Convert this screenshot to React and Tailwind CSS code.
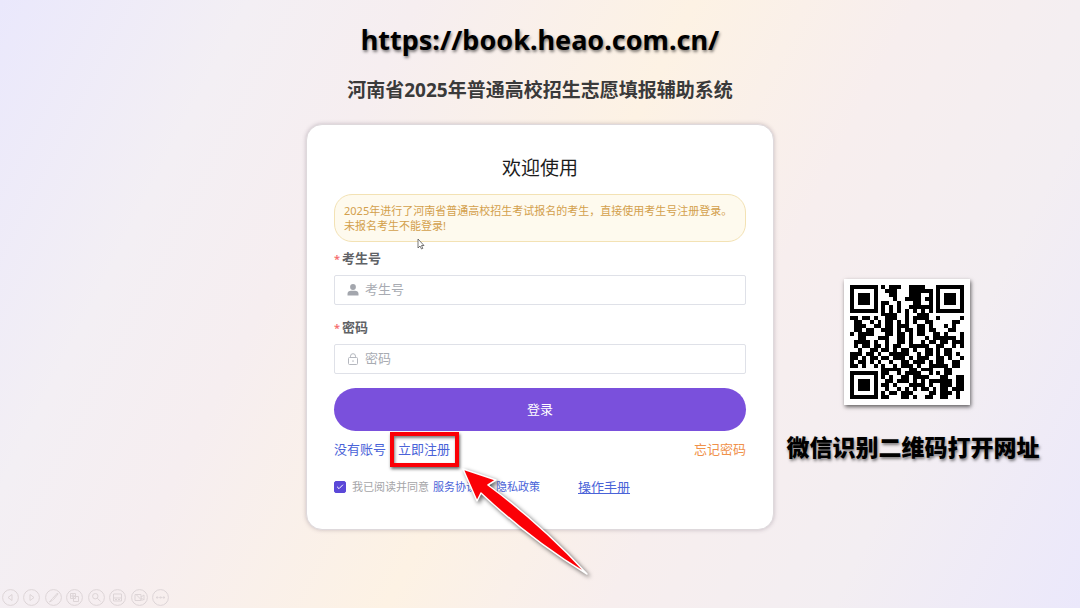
import React, { useState } from 'react';
import { Check } from 'lucide-react';

const QR_ROWS = [
    '#######.#.###..####...#######',
    '#.....#..###...######.#.....#',
    '#.###.#...##...###..#.#.###.#',
    '#.###.#....#..####.##.#.###.#',
    '#.###.#.##..#...##..#.#.###.#',
    '#.....#.#.#.#..######.#.....#',
    '#######.#.#.#.#.#.#.#.#######',
    '........####..#..###.........',
    '##.##.#..###..#.####..#.....#',
    '.##..#.#.##.#.#.#..##.....##.',
    '.###..##.##.###..##.#...#.#..',
    '.##.##..###.#.##.##.##...##..',
    '#.####...##.##.#.##..##.#...#',
    '..##...###..##.#...#.######.#',
    '.####.#..#..##.#..#.##.##.###',
    '.#.##.##.#.##..#####..##..#.#',
    '..#..##.##.#.##.#..##.#.##...',
    '###.##.#..#####..#.##.#.##.#.',
    '##.#.##.##.###.#.###..##.#..#',
    '#.##.#.#..#..##.###.#.##..##.',
    '##.#..#.#..#.###.#..#####.##.',
    '........#####..##.###...##...',
    '#######.##..#.####..#.#.##...',
    '#.....#.#.#..##.####...##..##',
    '#.###.#..##.###.#.#.######.##',
    '#.###.#.##.#...####.#..###.##',
    '#.###.#..#..#.#.#.##.#.##.###',
    '#.....#.#.##.###....##.###.#.',
    '#######.##...##.#..##..##..#.',
];

const QrCode = () => (
    <div className="bg-white p-1.5 shadow-[1px_2px_4px_rgba(0,0,0,0.6)]">
        <svg className="w-[114px] h-[114px] block" viewBox="0 0 29 29" shapeRendering="crispEdges" role="img" aria-label="二维码">
            {QR_ROWS.map((row, y) =>
                row.split('').map((cell, x) => (
                    cell === '#' ? <rect key={`${x}-${y}`} x={x} y={y} width="1" height="1" /> : null
                ))
            )}
        </svg>
    </div>
);

const UserIcon = () => (
    <svg className="w-3 h-3 shrink-0" viewBox="0 0 12 12" fill="#a3a6ad">
        <circle cx="6" cy="3" r="2.9" />
        <path d="M0.5 11.5V9.8C0.5 7.9 2 6.8 4 6.8h4c2 0 3.500 1.100 3.500 3v1.700z" />
    </svg>
);

const LockIcon = () => (
    <svg className="w-3 h-3 shrink-0" viewBox="0 0 12 12" fill="none" stroke="#b4b7be" strokeWidth="1">
        <rect x="1.500" y="4.500" width="9" height="7" rx="1" />
        <path d="M3.500 4.500V3.200a2.500 2.500 0 0 1 5 0v1.300M6 7.200v1.800" />
    </svg>
);

const Field = ({ id, label, type, icon }) => (
    <div>
        <label htmlFor={id} className="block mb-2 text-[13px] leading-4 font-semibold text-[#606266]">
            <span className="text-[#f56c6c] mr-0.5 text-[11px]">*</span>{label}
        </label>
        <div className="flex items-center gap-1.5 h-[30px] px-3 bg-white border border-[#dfe1e8] rounded-xs">
            {icon}
            <input
                id={id}
                type={type}
                placeholder={label}
                className="flex-1 min-w-0 text-[13px] text-[#606266] placeholder:text-[#a8abb2] outline-none"
            />
        </div>
    </div>
);

// Red box and arrow over the register link
const Callout = () => (
    <>
        <span className="absolute -left-[8px] -top-[7px] w-[69px] h-[35px] border-4 border-[#fb0006] shadow-[1px_2px_3px_rgba(0,0,0,0.6),inset_1px_2px_3px_rgba(0,0,0,0.5)] pointer-events-none"></span>
        <svg className="absolute left-[58px] top-6 w-[140px] h-[122px] max-w-none z-10 pointer-events-none drop-shadow-[2px_2px_2px_rgba(0,0,0,0.6)]" viewBox="0 0 140 122">
            <path d="M7 6L40 17L32 22Q86 62 131 111Q76 78 25 30L21 38Z" fill="#fb0006" stroke="#fff" strokeWidth="1.500" strokeLinejoin="round" />
        </svg>
    </>
);

const Pointer = () => (
    <svg className="absolute left-[82px] top-[43px] w-2 h-3" viewBox="0 0 8 12">
        <path d="M1 1v9l2-2 1.500 3 1.300-.6L4.500 7.500H7z" fill="#fff" stroke="#555" strokeWidth=".8" />
    </svg>
);

const SLIDE_TOOLS = [
    { label: '上一页', icon: <path d="M10 5.500v6L6 8.500z" /> },
    { label: '下一页', icon: <path d="M7 5.500v6l4-3z" /> },
    { label: '画笔', icon: <path d="M12.500 4L7.500 9.500l1 1L13 5zM7 10l-2.500 3 3.200-1.800" /> },
    { label: '全部幻灯片', icon: <path d="M4.500 4.500h5v5h-5zM7.500 7.500h5v5h-5zM4.500 7h5M7 4.500v5" /> },
    { label: '放大', icon: <path d="M10 7.200a2.700 2.700 0 1 1-5.400 0 2.700 2.700 0 0 1 5.400 0zM9.400 9.300l3.200 3.200" /> },
    { label: '字幕', icon: <path d="M4.500 5h8v7h-8zM4.500 9h8M6 10.500h2M9 10.500h2" /> },
    { label: '摄像头', icon: <path d="M4 5.500h6v6H4zM10 8l3-2v5l-3-2M4.500 5l7 7" /> },
    { label: '更多', icon: <path d="M4.500 8h1.500v1h-1.500zM7.800 8h1.500v1h-1.500zM11 8h1.500v1h-1.500z" /> },
];

const SlideToolbar = () => (
    <div className="flex justify-between w-[167px] ml-0.5 mb-0.5 mt-auto">
        {SLIDE_TOOLS.map((tool) => (
            <button key={tool.label} type="button" aria-label={tool.label} className="w-[17px] h-[17px]">
                <svg viewBox="0 0 17 17" fill="none" stroke="#ddd5d7" strokeWidth="1">
                    <circle cx="8.500" cy="8.500" r="7.900" />
                    {tool.icon}
                </svg>
            </button>
        ))}
    </div>
);

const LoginCard = () => {
    const [agreed, setAgreed] = useState(true);

    return (
        <form
            className="bg-white border border-[#ded9dc] rounded-2xl px-[27px] pt-[31px] pb-8 shadow-[0_0_4px_rgba(90,70,90,0.3)]"
            onSubmit={(e) => e.preventDefault()}
        >
            <h2 className="text-center text-[19px] leading-6 text-[#1c1c1c]">欢迎使用</h2>

            <div className="relative mt-3.5 mb-2 px-[9px] py-2 bg-[#fefaee] border border-[#f3e2b4] rounded-[18px] text-[11px] leading-[15px] text-[#d3a04c]">
                <p className="whitespace-nowrap">2025年进行了河南省普通高校招生考试报名的考生，直接使用考生号注册登录。</p>
                <p>未报名考生不能登录!</p>
                <Pointer />
            </div>

            <div className="flex flex-col gap-3.5">
                <Field id="examinee" label="考生号" type="text" icon={<UserIcon />} />
                <Field id="password" label="密码" type="password" icon={<LockIcon />} />
                <button type="submit" className="h-[43px] w-full rounded-full bg-[#7a50dc] text-white text-[13px]">登录</button>
            </div>

            <div className="flex justify-between mt-2 text-[13px] leading-5 text-[#4a63d8]">
                <div className="flex gap-3">
                    <span>没有账号</span>
                    <a href="#register" className="relative">立即注册<Callout /></a>
                </div>
                <a href="#forgot" className="text-[#f0914a]">忘记密码</a>
            </div>

            <div className="flex items-center mt-[18px] text-[11px] leading-5">
                <span className="relative w-3 h-3 mr-1.5">
                    <input
                        id="agree"
                        type="checkbox"
                        checked={agreed}
                        onChange={() => setAgreed(!agreed)}
                        className="block w-3 h-3 appearance-none rounded-xs border border-[#5b48d8] checked:bg-[#5b48d8]"
                    />
                    {agreed && <Check className="absolute inset-0.5 w-2 h-2 text-white pointer-events-none" strokeWidth={3} />}
                </span>
                <label htmlFor="agree" className="text-[#a5a5a8] mr-1">我已阅读并同意</label>
                <a href="#terms" className="text-[#4a63d8]">服务协议</a>
                <span className="text-[#a5a5a8] mx-1">和</span>
                <a href="#privacy" className="text-[#4a63d8]">隐私政策</a>
                <a href="#manual" className="ml-[38px] text-[13px] text-[#4a63d8] underline">操作手册</a>
            </div>
        </form>
    );
};

const App = () => (
    <div className="min-h-screen flex flex-col overflow-hidden font-['Noto_Sans','Noto_Sans_CJK_SC',sans-serif] bg-[linear-gradient(117deg,#eae8fc_0%,#f3eff4_18%,#f6eef0_30%,#fdf2e4_50%,#f7eeee_66%,#f3eef2_82%,#ebe8fb_100%)]">
        <header className="text-center pt-5">
            <p className="text-[27px] leading-10 font-bold text-black [text-shadow:1px_2px_3px_rgba(0,0,0,0.5)]">https://book.heao.com.cn/</p>
            <h1 className="mt-4 mb-5 text-[19px] leading-7 font-bold text-[#3a3a3a]">河南省2025年普通高校招生志愿填报辅助系统</h1>
        </header>

        <main className="grid grid-cols-[1fr_468px_1fr]">
            <div className="col-start-2">
                <LoginCard />
            </div>
            <aside className="flex flex-col items-center pt-[155px] pr-7">
                <div className="pr-3">
                    <QrCode />
                </div>
                <p className="mt-6 text-[23px] leading-9 font-black text-black whitespace-nowrap [text-shadow:1px_2px_3px_rgba(0,0,0,0.5)]">微信识别二维码打开网址</p>
            </aside>
        </main>

        <SlideToolbar />
    </div>
);

export default App;
